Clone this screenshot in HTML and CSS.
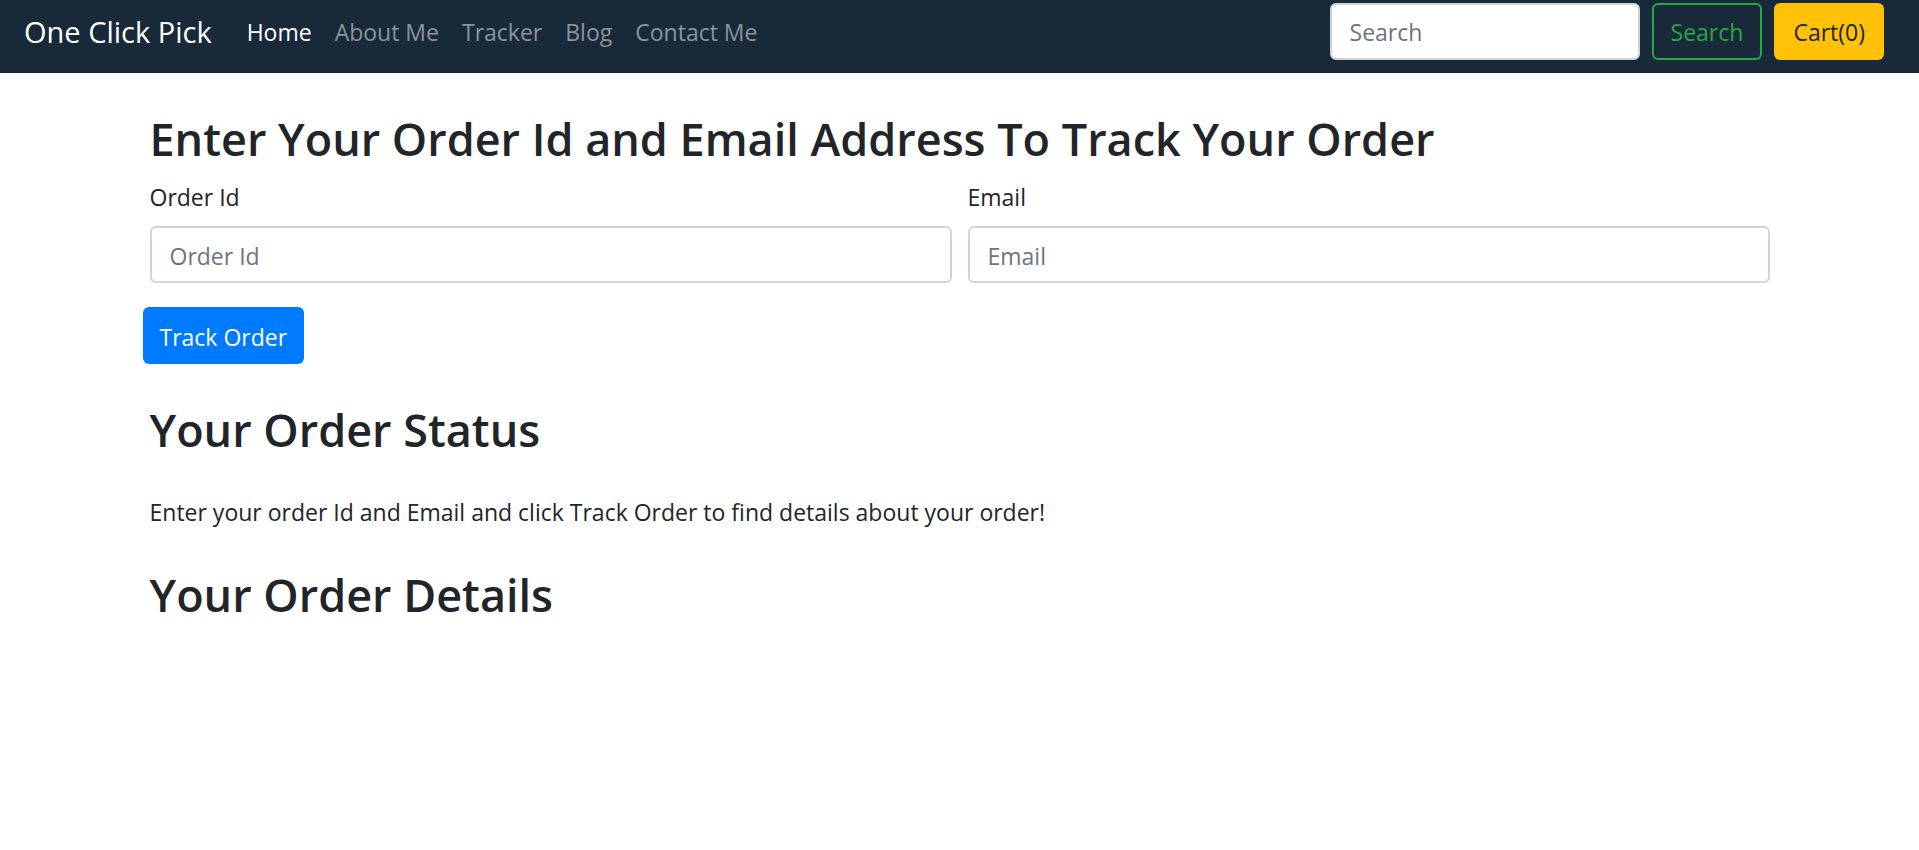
FILE: index.html
```html
<!DOCTYPE html>
<html lang="en">
<head>
<meta charset="utf-8">
<meta name="viewport" content="width=device-width, initial-scale=1">
<title>One Click Pick - Tracker</title>
<link rel="stylesheet" href="styles.css">
</head>
<body>
<nav class="navbar">
  <a class="brand" href="#">One Click Pick</a>
  <ul class="nav-list">
    <li><a class="nav-link active" href="#">Home</a></li>
    <li><a class="nav-link" href="#">About Me</a></li>
    <li><a class="nav-link" href="#">Tracker</a></li>
    <li><a class="nav-link" href="#">Blog</a></li>
    <li><a class="nav-link" href="#">Contact Me</a></li>
  </ul>
  <form class="nav-form">
    <input class="control search-box" type="search" placeholder="Search" aria-label="Search">
    <button class="btn btn-outline" type="submit">Search</button>
    <button class="btn btn-cart" type="button">Cart(0)</button>
  </form>
</nav>
<main class="container">
  <h2 class="heading">Enter Your Order Id and Email Address To Track Your Order</h2>
  <form class="track-form">
    <div class="form-row">
      <div class="field">
        <label for="orderId">Order Id</label>
        <input class="control" id="orderId" type="text" placeholder="Order Id">
      </div>
      <div class="field">
        <label for="email">Email</label>
        <input class="control" id="email" type="email" placeholder="Email">
      </div>
    </div>
    <button class="btn btn-primary" type="submit">Track Order</button>
  </form>
  <h2 class="heading">Your Order Status</h2>
  <p class="status">Enter your order Id and Email and click Track Order to find details about your order!</p>
  <h2 class="heading">Your Order Details</h2>
</main>
</body>
</html>
```

FILE: styles.css
```css
* {
  box-sizing: border-box;
}

body {
  margin: 0;
  background: #fff;
  color: #212529;
  font-family: "Segoe UI", "Open Sans", sans-serif;
  font-size: 23px;
  line-height: 36px;
}

.navbar {
  display: flex;
  align-items: center;
  padding: 3px 35px 13px 24px;
  background: #182a39;
}

.brand {
  margin-right: 35px;
  color: #fff;
  font-size: 29px;
  text-decoration: none;
}

.nav-list {
  display: flex;
  gap: 23px;
  margin: 0;
  padding: 0;
  list-style: none;
}

.nav-link {
  color: #8b949c;
  text-decoration: none;
}

.nav-link.active {
  color: #fff;
}

.nav-form {
  display: flex;
  gap: 12px;
  margin-left: auto;
}

.control {
  display: block;
  width: 100%;
  height: 57px;
  padding: 10px 18px 7px;
  border: 2px solid #ced4da;
  border-radius: 6px;
  background: #fff;
  color: #495057;
  font: inherit;
}

.control::placeholder {
  color: #6c757d;
  opacity: 1;
}

.search-box {
  width: 310px;
  padding: 8px 18px;
}

.btn {
  height: 57px;
  padding: 8px 17px;
  border: 2px solid transparent;
  border-radius: 6px;
  font: inherit;
  white-space: nowrap;
  cursor: pointer;
}

.btn-outline {
  border-color: #28a745;
  background: transparent;
  color: #28a745;
}

.btn-cart {
  background: #ffc107;
  color: #212529;
}

.btn-primary {
  margin-left: -7px;
  padding: 10px 15px 7px;
  background: #007bff;
  color: #fff;
}

.container {
  max-width: 1710px;
  margin: 0 auto;
  padding: 36px 45px;
}

.heading {
  margin: 0;
  font-size: 45px;
  font-weight: 600;
  line-height: 60px;
}

.track-form {
  margin: 10px 0 36px;
}

.form-row {
  display: grid;
  grid-template-columns: 1fr 1fr;
  gap: 16px;
  margin-bottom: 24px;
}

.field label {
  display: block;
  margin-bottom: 11px;
}

.status {
  margin: 34px 0 35px;
}
```
